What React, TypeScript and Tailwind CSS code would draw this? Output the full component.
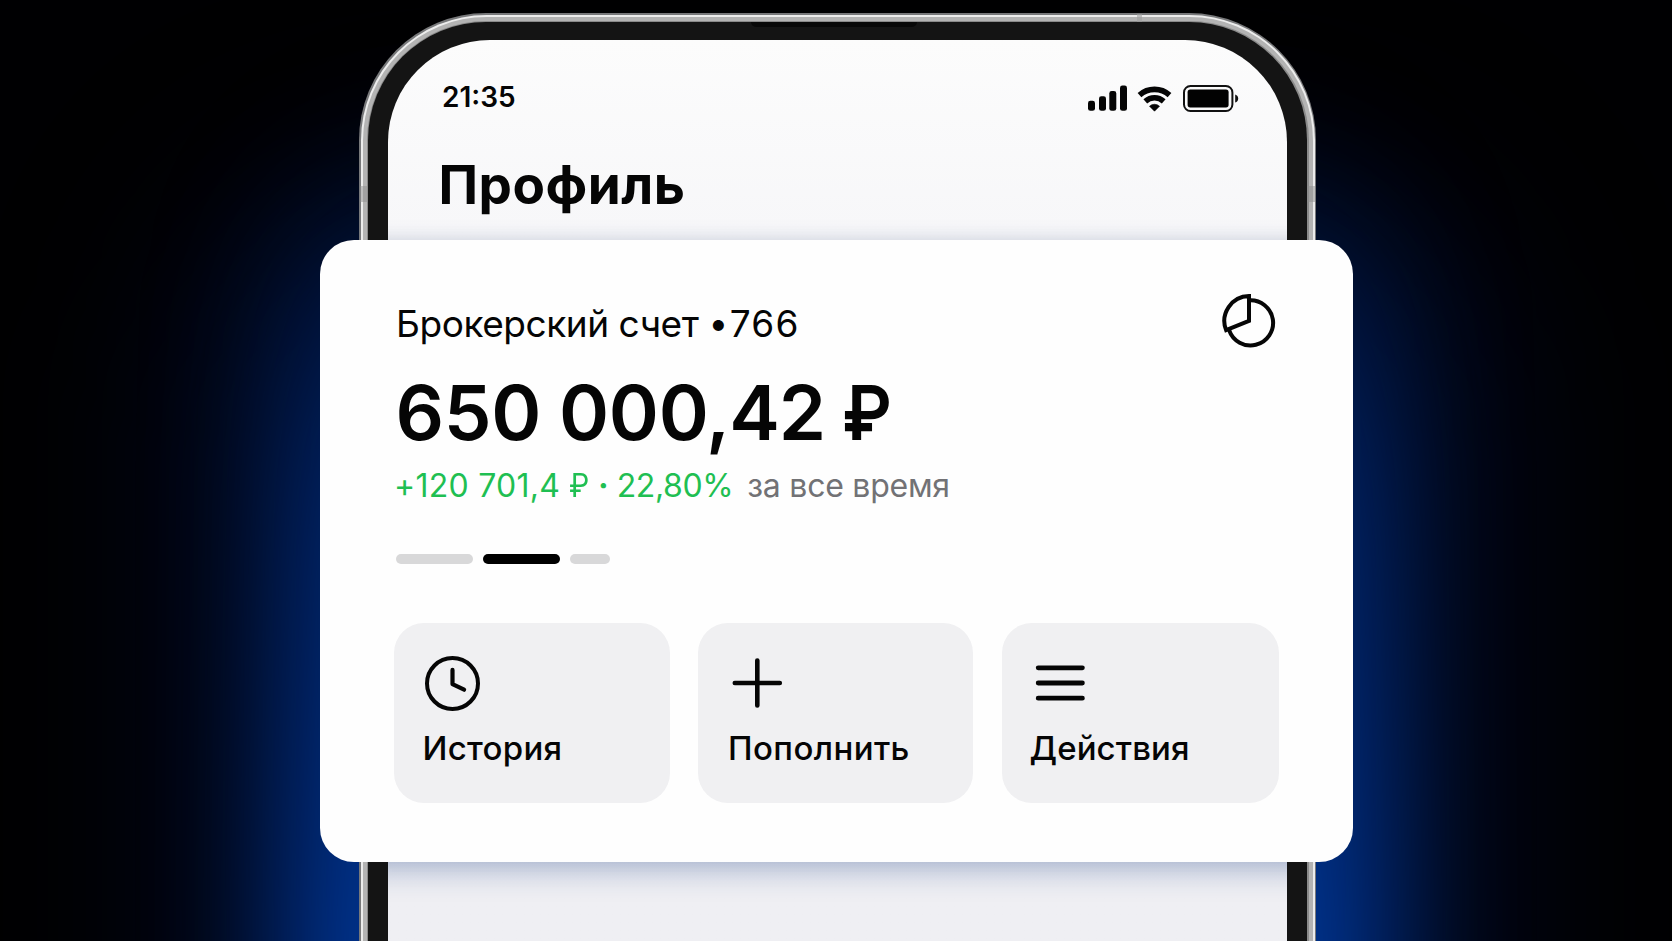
import type { ReactNode } from "react";

function SignalIcon() {
  return (
    <svg width="40" height="26" viewBox="0 0 40 26" fill="#050505">
      <rect x="0" y="15.8" width="7" height="10" rx="2.4" />
      <rect x="11" y="11.2" width="7" height="14.6" rx="2.4" />
      <rect x="21.3" y="6" width="7" height="19.8" rx="2.4" />
      <rect x="32" y="0.6" width="7" height="25.2" rx="2.4" />
    </svg>
  );
}

function WifiIcon() {
  return (
    <svg width="36" height="27" viewBox="-17.5 -26.5 36 27" fill="none" stroke="#050505" strokeWidth="5.6">
      <path d="M-15 -16.4A22.4 22.4 0 0 1 15 -16.4" />
      <path d="M-9.2 -10.2A13.8 13.8 0 0 1 9.2 -10.2" />
      <path d="M0 -0.3L-5 -5.3A7.4 7.4 0 0 1 5 -5.3Z" fill="#050505" stroke="#050505" strokeWidth="0.6" strokeLinejoin="round" />
    </svg>
  );
}

function BatteryIcon() {
  return (
    <svg width="56" height="28" viewBox="0 0 56 28">
      <rect x="1" y="1" width="48.4" height="25" rx="6.5" fill="none" stroke="#111" strokeWidth="2" />
      <rect x="4.6" y="4.6" width="41" height="17.8" rx="2.6" fill="#020202" />
      <path d="M52.2 9.4Q55.2 10.4 55.2 13.5T52.2 17.6Z" fill="#111" />
    </svg>
  );
}

function PieIcon() {
  return (
    <svg width="56" height="56" viewBox="1221.3 293.3 56 56" fill="none" stroke="#060606" strokeWidth="4">
      <path d="M1249.3 300.6A22.6 22.6 0 1 1 1229.4 330.4" />
      <path d="M1249.3 296.3V321.2L1226.4 330.4A25 25 0 0 1 1249.3 296.3Z" />
    </svg>
  );
}

function ClockIcon() {
  return (
    <svg width="56" height="56" viewBox="-28.5 -28.5 56 56" fill="none" stroke="#050505" strokeWidth="4" strokeLinecap="round" strokeLinejoin="round">
      <circle r="25.5" />
      <path d="M0 -13.6V0.6L11.6 6.2" strokeWidth="4.2" />
    </svg>
  );
}

function PlusIcon() {
  return (
    <svg width="56" height="56" viewBox="-28.3 -28 56 56" fill="none" stroke="#050505" strokeWidth="4.6" strokeLinecap="round">
      <path d="M-22.5 0H22.5M0 -22.5V22.5" />
    </svg>
  );
}

function MenuIcon() {
  return (
    <svg width="56" height="56" viewBox="-28.3 -28 56 56" fill="none" stroke="#050505" strokeWidth="4.8" strokeLinecap="round">
      <path d="M-22.1 -15.2H22.1M-22.1 0H22.1M-22.1 15.2H22.1" />
    </svg>
  );
}

function Tile({ icon, label, className }: { icon: ReactNode; label: string; className: string }) {
  return (
    <button className={`flex h-[180px] flex-col items-start rounded-[30px] bg-[#f0f0f2] pt-8 text-left text-[33px] font-medium leading-10 text-[#050505] ${className}`}>
      {icon}
      <span className="mt-[17px] whitespace-nowrap">{label}</span>
    </button>
  );
}

function Phone() {
  return (
    <div className="relative col-start-1 row-start-1 ml-[359px] mt-[13px] h-[1100px] w-[957px] rounded-[127px] bg-[#77787a] p-[1.5px]">
      <div className="h-full rounded-[125.5px] bg-[#ececec] p-[2px]">
        <div className="h-full rounded-[123.5px] bg-[#b3b3b3] p-[4px]">
          <div className="h-full rounded-[119.5px] bg-[#8a8a8a] p-[1.5px]">
            <div className="h-full rounded-[118px] bg-[#141414] pl-[19.5px] pr-[20px] pt-[18px]">
              <div className="h-full rounded-[102px] bg-linear-to-b from-[#fcfcfc] from-0% via-[#f7f7f9] via-[18%] to-[#efeff3] to-80% text-[#050505]">
                <div className="flex items-start justify-between pl-[54.5px] pr-[48px] pt-[43px]">
                  <span className="text-[28px] font-semibold leading-7">21:35</span>
                  <div className="flex items-start pt-[2px]">
                    <SignalIcon />
                    <span className="ml-[9.5px]"><WifiIcon /></span>
                    <span className="-mt-[0.5px] ml-[9.5px] mr-[0.5px]"><BatteryIcon /></span>
                  </div>
                </div>
                <h1 className="ml-[51px] mt-[42.5px] text-[53px] font-bold leading-[60px] tracking-[0.5px]">Профиль</h1>
              </div>
            </div>
          </div>
        </div>
      </div>
      <div className="absolute left-[392px] top-[9px] h-[5px] w-[166px] rounded-b-md bg-[#080808]" />
      <div className="absolute left-[778px] top-px h-[8px] w-[5px] bg-[#a0a0a0]/60" />
      <div className="absolute left-px top-[173px] h-4 w-[8px] bg-[#8f8f8f]/50" />
      <div className="absolute right-px top-[173px] h-4 w-[8px] bg-[#8f8f8f]/50" />
    </div>
  );
}

function AccountCard() {
  return (
    <section className="relative col-start-1 row-start-1 ml-[320px] mt-[240px] flex h-[622px] w-[1033px] flex-col rounded-[34px] bg-[#fefefe] pl-[73.5px] pr-[74.5px] pt-[53px] text-[#050505]">
      <div className="flex h-[79px] items-start justify-between">
        <div className="ml-[2.5px] flex whitespace-nowrap pt-[9px] text-[37px] leading-[44px]">
          <span className="tracking-[-0.45px]">Брокерский счет</span>
          <span className="relative -top-px ml-[10px] text-[35px]">•</span>
          <span className="ml-[1.5px] tracking-[1.2px]">766</span>
        </div>
        <div className="mr-[1.5px]"><PieIcon /></div>
      </div>
      <div className="ml-[2px] flex whitespace-nowrap text-[76px] font-semibold leading-[80px]">
        <span className="tracking-[-0.3px] [word-spacing:-1px]">650 000</span>
        <span className="-ml-[2.5px] tracking-[-1px]">,42</span>
        <span className="ml-[16.5px] origin-left scale-x-90">₽</span>
      </div>
      <div className="mt-[14px] flex whitespace-nowrap text-[32px] leading-10">
        <div className="ml-[0.5px] flex text-[#1fbf52]">
          <span className="tracking-[0.25px]">+120 701,4</span>
          <span className="ml-[8.5px] origin-left scale-x-90">₽</span>
          <span className="ml-[7px] font-bold">·</span>
          <span className="ml-[8px] tracking-[-0.4px]">22,80%</span>
        </div>
        <span className="ml-[14px] tracking-[-0.25px] text-[#727275]">за все время</span>
      </div>
      <div className="ml-[2px] mt-[48px] flex gap-[10px]">
        <span className="h-[10px] w-[77px] rounded-full bg-[#d8d8d9]" />
        <span className="h-[10px] w-[77px] rounded-full bg-black" />
        <span className="h-[10px] w-[40px] rounded-full bg-[#d8d8d9]" />
      </div>
      <div className="mt-[59px] flex justify-between">
        <Tile className="w-[276px] pl-[30.9px] tracking-[0.3px] [&>span]:-ml-[2px]" icon={<ClockIcon />} label="История" />
        <Tile className="w-[275px] pl-[31px] tracking-[0.4px] [&>span]:-ml-[1px]" icon={<PlusIcon />} label="Пополнить" />
        <Tile className="w-[277px] pl-[30.5px] tracking-[0.1px] [&>span]:-ml-[2.5px]" icon={<MenuIcon />} label="Действия" />
      </div>
    </section>
  );
}

export default function App() {
  return (
    <main className="relative grid h-[941px] w-[1672px] overflow-hidden bg-[#000002] font-['Inter','Liberation_Sans',sans-serif]">
      <div className="absolute -bottom-[300px] left-[180px] h-[1060px] w-[1312px] rounded-[220px] bg-[#000820] blur-[90px]" />
      <div className="absolute -bottom-[200px] left-[284px] h-[1000px] w-[1104px] rounded-[160px] bg-linear-to-b from-[#000820]/30 from-0% via-[#00266c] via-[34%] to-[#003696] to-85% blur-[62px]" />
      <Phone />
      <div className="absolute left-[360px] top-[240px] h-[622px] w-[957px] shadow-[0_10px_26px_rgba(30,65,135,0.3),0_-2px_14px_rgba(40,40,60,0.07)] [clip-path:inset(-30px_30px_-60px_28px)]" />
      <AccountCard />
    </main>
  );
}
